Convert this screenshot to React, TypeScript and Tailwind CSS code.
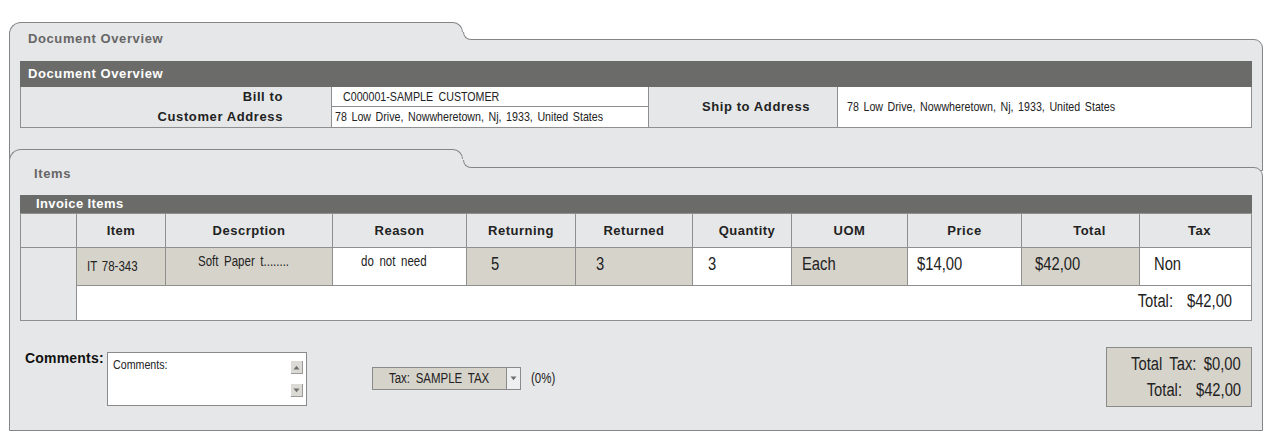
import React from "react";

const SANS = "font-['Liberation_Sans',Arial,sans-serif]";

function N({ children, a = "l", className = "" }: { children: React.ReactNode; a?: "l" | "r" | "c"; className?: string }) {
  const o = a === "l" ? "origin-left" : a === "r" ? "origin-right" : "origin-center";
  return <span className={`inline-block whitespace-nowrap scale-x-[0.82] ${o} ${className}`}>{children}</span>;
}

function TabRow({ h, children, innerBg }: { h: string; children?: React.ReactNode; innerBg: string }) {
  return (
    <div className={`relative z-10 -mb-px flex ${h}`}>
      <div className="w-[444px] shrink-0 rounded-tl-[12px] border-l border-t border-[#858585] bg-[#e6e7e8]">{children}</div>
      <div className="flex w-[10px] shrink-0 flex-col">
        <div className="h-[10px] rounded-tr-[10px] border-r border-t border-[#858585] bg-[#e6e7e8]" />
        <div className="flex-1 bg-[#e6e7e8]" />
      </div>
      <div className="flex w-[8px] shrink-0 flex-col">
        <div className="flex-1" />
        <div className="h-[8px] bg-[#e6e7e8]">
          <div className={`h-full rounded-bl-[8px] border-b border-l border-[#858585] ${innerBg}`} />
        </div>
      </div>
      <div className="flex-1" />
    </div>
  );
}

const HEAD = "flex items-center justify-center border-b border-r border-[#8f8f8f] bg-[#e6e7e8] text-[13px] font-bold tracking-[0.5px] text-[#222]";
const BEIGE = "border-b border-r border-[#8f8f8f] bg-[#d6d3cb]";
const WHITE = "border-b border-r border-[#8f8f8f] bg-white";
const VAL = "pt-[6px] text-[18px] leading-[20px] text-[#222]";

function UpArrow() {
  return (
    <svg width="7" height="5" viewBox="0 0 7 5"><path d="M0.5 4.5 L3.5 0.8 L6.5 4.5 Z" fill="#6f6f6f" /></svg>
  );
}
function DownArrow() {
  return (
    <svg width="7" height="5" viewBox="0 0 7 5"><path d="M0.5 0.5 L3.5 4.2 L6.5 0.5 Z" fill="#6f6f6f" /></svg>
  );
}

export default function App() {
  return (
    <div className={`min-h-[443px] w-[1275px] bg-white pl-[9px] pt-[22px] ${SANS}`}>
      <div className="w-[1254px]">
        {/* Panel 1 */}
        <TabRow h="h-[18px]" innerBg="bg-white">
          <div className="whitespace-nowrap pl-[18px] pt-[9px] text-[13px] font-bold leading-[14px] tracking-[0.6px] text-[#666]">
            Document Overview
          </div>
        </TabRow>
        <div className="rounded-tr-[9px] border border-[#858585] bg-[#e6e7e8] px-[10px] pb-[42px] pt-[21px]">
          <div className="h-[26px] bg-[#6b6c6a] pl-[8px] text-[13px] font-bold leading-[26px] tracking-[0.6px] text-white">
            Document Overview
          </div>
          <div className="grid grid-cols-[311px_317px_189px_414px] border-l border-[#8f8f8f]">
            <div className="row-span-2 flex flex-col border-b border-r border-[#8f8f8f] bg-[#e6e7e8] pr-[48px] text-right text-[13px] font-bold tracking-[0.6px] text-[#222]">
              <div className="h-[20px] leading-[20px]">Bill to</div>
              <div className="h-[20px] leading-[20px]">Customer Address</div>
            </div>
            <div className={`h-[20px] ${WHITE} pl-[11px] text-[13px] leading-[19px] text-[#222] [word-spacing:3px]`}>
              <N>C000001-SAMPLE CUSTOMER</N>
            </div>
            <div className="row-span-2 flex items-center justify-center border-b border-r border-[#8f8f8f] bg-[#e6e7e8] pl-[26px] text-[13px] font-bold tracking-[0.6px] text-[#222]">
              Ship to Address
            </div>
            <div className={`row-span-2 flex items-center ${WHITE} pl-[9px] text-[13px] text-[#222] [word-spacing:2px]`}>
              <N>78 Low Drive, Nowwheretown, Nj, 1933, United States</N>
            </div>
            <div className={`h-[21px] ${WHITE} pl-[3px] text-[13px] leading-[20px] text-[#222] [word-spacing:2px]`}>
              <N>78 Low Drive, Nowwheretown, Nj, 1933, United States</N>
            </div>
          </div>
        </div>

        {/* Panel 2 */}
        <div className="-mt-[22px]">
          <TabRow h="h-[19px]" innerBg="bg-[#e6e7e8]" />
          <div className="rounded-tr-[9px] border border-[#858585] bg-[#e6e7e8] px-[10px] pb-[23px]">
            <div className="h-[27px] pl-[14px] text-[13px] font-bold leading-[12px] tracking-[0.6px] text-[#666]">Items</div>
            <div className="h-[18px] bg-[#6b6c6a] pl-[16px] text-[13px] font-bold leading-[18px] tracking-[0.4px] text-white">
              Invoice Items
            </div>
            <div className="grid grid-cols-[56px_89px_167px_134px_109px_117px_99px_116px_114px_118px_112px] grid-rows-[34px_38px_35px] border-l border-t border-[#8f8f8f]">
              <div className={HEAD}></div>
              <div className={HEAD}>Item</div>
              <div className={HEAD}>Descrption</div>
              <div className={HEAD}>Reason</div>
              <div className={HEAD}>Returning</div>
              <div className={HEAD}>Returned</div>
              <div className={`${HEAD} pl-[10px]`}>Quantity</div>
              <div className={HEAD}>UOM</div>
              <div className={HEAD}>Price</div>
              <div className={`${HEAD} pl-[18px]`}>Total</div>
              <div className={`${HEAD} pl-[8px]`}>Tax</div>

              <div className="row-span-2 border-b border-r border-[#8f8f8f] bg-[#e6e7e8]" />
              <div className={`flex items-center ${BEIGE} pl-[10px] text-[14px] text-[#222] [word-spacing:2px]`}><N>IT 78-343</N></div>
              <div className={`${BEIGE} pl-[32px] pt-[5px] text-[14px] leading-[16px] text-[#222] [word-spacing:3px]`}><N>Soft Paper t........</N></div>
              <div className={`${WHITE} pl-[28px] pt-[5px] text-[14px] leading-[16px] text-[#222] [word-spacing:3px]`}><N>do not need</N></div>
              <div className={`${BEIGE} pl-[24px] ${VAL}`}><N>5</N></div>
              <div className={`${BEIGE} pl-[20px] ${VAL}`}><N>3</N></div>
              <div className={`${WHITE} pl-[15px] ${VAL}`}><N>3</N></div>
              <div className={`${BEIGE} pl-[10px] ${VAL}`}><N>Each</N></div>
              <div className={`${WHITE} pl-[9px] ${VAL}`}><N>$14,00</N></div>
              <div className={`${BEIGE} pl-[13px] ${VAL}`}><N>$42,00</N></div>
              <div className={`${WHITE} pl-[14px] ${VAL}`}><N>Non</N></div>

              <div className={`col-span-10 flex items-center justify-end ${WHITE} pb-[3px] pr-[19px] text-[18px] text-[#222] [word-spacing:12px]`}>
                <N a="r">Total: $42,00</N>
              </div>
            </div>

            <div className="mt-[26px] flex items-start">
              <div className="ml-[5px] mt-[5px] flex items-start">
                <div className="w-[82px] text-[14px] font-bold leading-[12px] tracking-[0.2px] text-[#111]">Comments:</div>
                <div className="flex h-[54px] w-[200px] justify-between border border-[#8a8a8a] bg-white">
                  <div className="pl-[5px] pt-[5px] text-[13px] leading-[14px] text-[#222]"><N>Comments:</N></div>
                  <div className="mr-[3px] mt-[8px] flex flex-col gap-[10px]">
                    <div className="flex h-[13px] w-[12px] items-center justify-center border-b border-r border-[#9a9a9a] bg-[#dcdad4]">
                      <UpArrow />
                    </div>
                    <div className="flex h-[13px] w-[12px] items-center justify-center border-b border-r border-[#9a9a9a] bg-[#dcdad4]">
                      <DownArrow />
                    </div>
                  </div>
                </div>
              </div>
              <div className="ml-[65px] mt-[20px] flex items-center">
                <div className="flex h-[23px] border border-[#8a8a8a]">
                  <div className="flex w-[133px] items-center justify-center bg-[#d6d3cb] text-[14px] text-[#222] [word-spacing:3px]">
                    <N a="c">Tax: SAMPLE TAX</N>
                  </div>
                  <div className="flex w-[14px] items-center justify-center border-l border-[#8a8a8a] bg-[#eeeff0]">
                    <DownArrow />
                  </div>
                </div>
                <div className="ml-[10px] text-[14px] text-[#222]"><N>(0%)</N></div>
              </div>
              <div className="ml-auto flex h-[60px] w-[146px] flex-col items-end border border-[#8a8a8a] bg-[#d6d3cb] pr-[10px] pt-[3px] text-[18px] leading-[26px] text-[#222] [word-spacing:4px]">
                <N a="r">Total Tax: $0,00</N>
                <N a="r" className="[word-spacing:12px]">Total: $42,00</N>
              </div>
            </div>
          </div>
        </div>
      </div>
    </div>
  );
}
